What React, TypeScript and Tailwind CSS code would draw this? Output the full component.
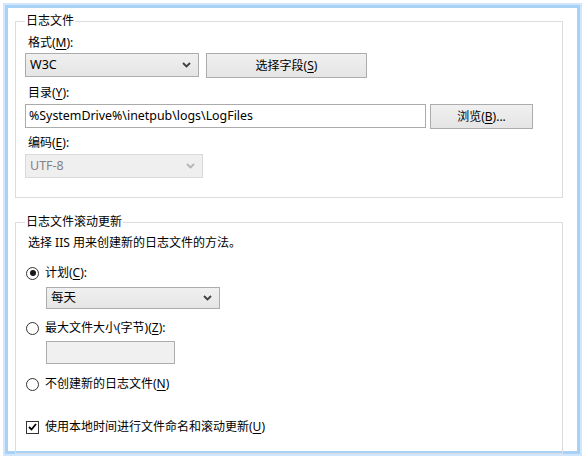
import React from "react";

const font = { fontFamily: '"Noto Sans", "Noto Sans CJK SC", sans-serif' };

function U({ c }: { c: string }) {
  return <span className="underline underline-offset-[2px]">{c}</span>;
}

function Chevron({ color = "#404040" }: { color?: string }) {
  return (
    <svg width="9" height="6" viewBox="0 0 9 6" className="shrink-0">
      <path d="M1 1 L4.5 4.5 L8 1" fill="none" stroke={color} strokeWidth="1.8" />
    </svg>
  );
}

function Select({ text, w, h, disabled }: { text: string; w: string; h: string; disabled?: boolean }) {
  return (
    <div
      className={`${w} ${h} flex items-center justify-between pl-[4px] pr-[7px] border ${
        disabled
          ? "border-[#d9d9d9] bg-[#efefef] text-[#838383]"
          : "border-[#acacac] bg-gradient-to-b from-[#f0f0f0] to-[#e5e5e5] text-black"
      }`}
    >
      <span className="text-[12.5px]">{text}</span>
      <Chevron color={disabled ? "#b5b5b5" : "#404040"} />
    </div>
  );
}

function Button({ children, w, h }: { children: React.ReactNode; w: string; h: string }) {
  return (
    <div
      className={`${w} ${h} flex items-center justify-center border border-[#acacac] bg-gradient-to-b from-[#f0f0f0] to-[#e5e5e5] text-black`}
    >
      {children}
    </div>
  );
}

function Radio({ checked }: { checked?: boolean }) {
  return (
    <div className="w-[13px] h-[13px] rounded-full border border-[#333333] bg-white flex items-center justify-center shrink-0">
      {checked && <div className="w-[6px] h-[6px] rounded-full bg-[#1a1a1a]" />}
    </div>
  );
}

function Checkbox() {
  return (
    <div className="w-[13px] h-[13px] border border-[#333333] bg-white flex items-center justify-center shrink-0">
      <svg width="9" height="8" viewBox="0 0 9 8">
        <path d="M1 4 L3.5 6.5 L8 1" fill="none" stroke="#000" strokeWidth="1.8" />
      </svg>
    </div>
  );
}

export default function App() {
  return (
    <div className="w-[585px] h-[465px] bg-white p-[3px] text-[12px] leading-[16px] text-black" style={font}>
      <div className="border-[2px] border-[#cfe6fc]">
        <div className="border-[3px] border-[#a8d1f8] bg-white h-[449px] flex flex-col pl-[7px] pr-[14px] pt-[5px]">
          <fieldset className="border border-[#dcdcdc] min-w-0">
            <legend className="ml-[9px] px-[1px] leading-[16px]">日志文件</legend>
            <div className="flex flex-col pl-[9px] pb-[19px]">
              <div className="mt-[6px] pl-[3px] h-[16px]">
                格式(<U c="M" />):
              </div>
              <div className="mt-[2px] flex gap-[7px]">
                <Select text="W3C" w="w-[174px]" h="h-[24px]" />
                <Button w="w-[161px]" h="h-[25px]">
                  <span>
                    选择字段(<U c="S" />)
                  </span>
                </Button>
              </div>
              <div className="mt-[7px] pl-[3px] h-[16px]">
                目录(<U c="Y" />):
              </div>
              <div className="mt-[3px] flex gap-[4px]">
                <div className="w-[401px] h-[24px] border border-[#ababab] bg-white flex items-center pl-[3px] text-[12.4px]">
                  %SystemDrive%\inetpub\logs\LogFiles
                </div>
                <Button w="w-[103px]" h="h-[25px]">
                  <span>
                    浏览(<U c="B" />)...
                  </span>
                </Button>
              </div>
              <div className="mt-[6px] pl-[3px] h-[16px]">
                编码(<U c="E" />):
              </div>
              <div className="mt-[3px]">
                <Select text="UTF-8" w="w-[178px]" h="h-[24px]" disabled />
              </div>
            </div>
          </fieldset>

          <fieldset className="mt-[16px] border border-[#dcdcdc] min-w-0">
            <legend className="ml-[9px] px-[1px] leading-[16px]">日志文件滚动更新</legend>
            <div className="flex flex-col pl-[10px] pb-[18px]">
              <div className="mt-[5px] pl-[2px] h-[16px]">选择 IIS 用来创建新的日志文件的方法。</div>
              <div className="mt-[14px] h-[16px] flex items-center gap-[6px]">
                <Radio checked />
                <span>
                  计划(<U c="C" />):
                </span>
              </div>
              <div className="mt-[6px] pl-[20px]">
                <Select text="每天" w="w-[174px]" h="h-[22px]" />
              </div>
              <div className="mt-[11px] h-[16px] flex items-center gap-[6px]">
                <Radio />
                <span>
                  最大文件大小(字节)(<U c="Z" />):
                </span>
              </div>
              <div className="mt-[5px] pl-[20px]">
                <div className="w-[129px] h-[23px] border border-[#adadad] bg-[#f0f0f0]" />
              </div>
              <div className="mt-[12px] h-[16px] flex items-center gap-[6px]">
                <Radio />
                <span>
                  不创建新的日志文件(<U c="N" />)
                </span>
              </div>
              <div className="mt-[27px] h-[16px] flex items-center gap-[6px]">
                <Checkbox />
                <span>
                  使用本地时间进行文件命名和滚动更新(<U c="U" />)
                </span>
              </div>
            </div>
          </fieldset>
        </div>
      </div>
    </div>
  );
}
